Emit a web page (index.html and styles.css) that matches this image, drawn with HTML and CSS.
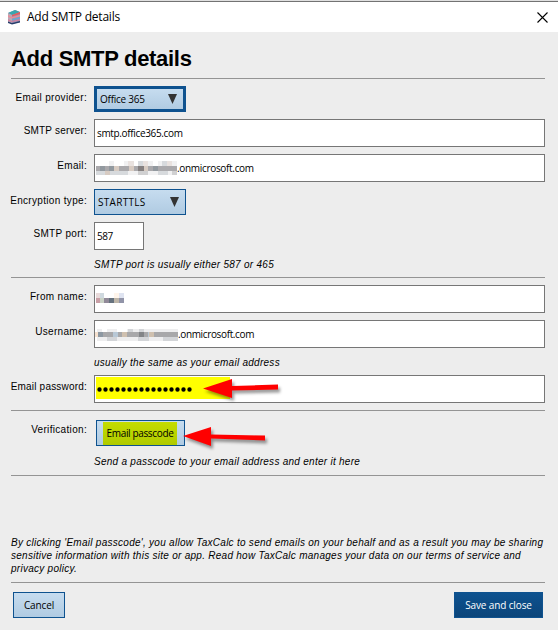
FILE: index.html
```html
<!DOCTYPE html>
<html lang="en">
<head>
<meta charset="utf-8">
<title>Add SMTP details</title>
<link rel="stylesheet" href="styles.css">
</head>
<body>
<header class="titlebar">
  <svg class="logo" width="14" height="16" viewBox="0 0 14 16">
    <path d="M1 4 8 1l5 2v10l-8 2-4-2z" fill="#9b91b5"/>
    <path d="M1 4 8 1l5 2-8 3z" fill="#3aa6ae"/>
    <path d="M1 4l4 2v9l-4-2z" fill="#b6aab8"/>
    <path d="M5 6l8-3v2L5 7.500z" fill="#e65b5c"/>
    <path d="M1 6l4 2 8-2v1.500L5 9.500 1 8z" fill="#e88d98"/>
    <path d="M5 10l8-2v1.500L5 11.500z" fill="#69a9d0"/>
    <path d="M1 10l4 2 8-2v1.500L5 13l-4-1z" fill="#ce829e"/>
    <path d="M1 12.500 5 14l8-2v1.500L5 15.500 1 14z" fill="#263e6b"/>
  </svg>
  <span class="window-name">Add SMTP details</span>
  <svg class="close" width="11" height="11" viewBox="0 0 11 11"><path d="M.5.5l10 10M10.500.5l-10 10" stroke="#000" stroke-width="1.100"/></svg>
</header>
<main>
  <h1>Add SMTP details</h1>
  <section class="group server">
    <div class="row"><label class="l-provider">Email provider:</label><div class="select focused"><span class="t-office">Office 365</span><i class="caret"></i></div></div>
    <div class="row"><label class="l-server">SMTP server:</label><div class="field"><span class="t-server">smtp.office365.com</span></div></div>
    <div class="row"><label class="l-email">Email:</label><div class="field"><svg class="mosaic m-email" width="81" height="14" viewBox="0 0 81 14" shape-rendering="crispEdges">
      <path fill="#f1f1f2" d="M0 0h81v14H0z"/>
      <path fill="#fff" d="M0 0h13v5H0zM18 0h10v5H18zM38 0h4v5h-4zM57 0h5v5h-5z"/>
      <path fill="#e9e2df" d="M32 0h6v5h-6zM47 0h5v5h-5zM71 0h5v5h-5z"/>
      <path fill="#d7dadd" d="M42 0h5v5h-5zM66 0h5v5h-5zM0 10h32v4H0zM62 10h10v4H62z"/>
      <path fill="#aaa9ac" d="M0 5h18v5H0zM23 5h10v5H23zM38 5h5v5h-5zM52 5h29v5H52z"/>
      <path fill="#d7cbc2" d="M18 5h5v5h-5zM33 5h5v5h-5zM9 10h5v4H9zM47 5h5v5h-5z"/>
      <path fill="#858080" d="M42 5h6v5h-6z"/><path fill="#92999f" d="M4 5h5v5H4zM13 5h5v5h-5zM57 5h5v5h-5z"/>
      <path fill="#d0d0d1" d="M42 10h10v4H42zM76 10h5v4h-5z"/>
    </svg><span class="t-domain">.onmicrosoft.com</span></div></div>
    <div class="row"><label class="l-enc">Encryption type:</label><div class="select"><span class="t-tls">STARTTLS</span><i class="caret"></i></div></div>
    <div class="row"><label class="l-port">SMTP port:</label><div class="field short"><span class="t-port">587</span></div></div>
    <p class="hint h-port">SMTP port is usually either 587 or 465</p>
  </section>
  <section class="group account">
    <div class="row"><label class="l-from">From name:</label><div class="field"><svg class="mosaic m-from" width="28" height="10" viewBox="0 0 28 10" shape-rendering="crispEdges">
      <path fill="#e8dada" d="M0 0h4v5H0z"/><path fill="#cfd9df" d="M4 0h4v5H4z"/><path fill="#fff5eb" d="M18 0h5v5h-5z"/><path fill="#dfe4f1" d="M23 0h5v5h-5z"/>
      <path fill="#c99fa6" d="M0 5h4v5H0z"/><path fill="#c9d1c5" d="M4 5h4v5H4z"/><path fill="#918a99" d="M8 5h5v5H8z"/><path fill="#66727e" d="M13 5h5v5h-5z"/><path fill="#beb6a9" d="M18 5h5v5h-5z"/><path fill="#9194a8" d="M23 5h5v5h-5z"/>
    </svg></div></div>
    <div class="row"><label class="l-user">Username:</label><div class="field"><svg class="mosaic m-user" width="83" height="12" viewBox="0 0 82 12" preserveAspectRatio="none" shape-rendering="crispEdges">
      <path fill="#eeeeef" d="M2 0h80v12H2z"/><path fill="#fff" d="M7 0h5v4H7zM22 0h10v4H22z"/>
      <path fill="#f5e1cf" d="M0 3h3v5H0z"/><path fill="#8d98a2" d="M3 3h5v5H3z"/><path fill="#a8a8aa" d="M8 3h10v5H8zM22 3h21v5H22zM48 3h34v5H48z"/>
      <path fill="#b8c8d6" d="M18 3h5v5h-5zM52 3h5v5h-5z"/><path fill="#828487" d="M43 3h5v5h-5z"/><path fill="#cfc0af" d="M27 3h5v5h-5zM53 3h5v5h-5z"/><path fill="#d3d5d8" d="M12 8h10v4H12zM42 8h11v4H42zM67 8h15v4H67zM33 0h5v3h-5zM43 0h5v3h-5z"/>
    </svg><span class="t-domain u-domain">.onmicrosoft.com</span></div></div>
    <p class="hint h-user">usually the same as your email address</p>
    <div class="row"><label class="l-pass">Email password:</label><div class="field"><span class="marked"><svg width="96" height="5" viewBox="0 0 96 5"><path d="M2.500 2.500h91" stroke="#000" stroke-width="4.400" stroke-linecap="round" stroke-dasharray="0 6"/></svg></span>
      <svg class="arrow" width="84" height="24" viewBox="0 0 84 24"><path d="M1 11.500 30 2v7l46-1.400v5L30 13.500V21z" fill="#f00"/></svg></div></div>
  </section>
  <section class="group verify">
    <div class="row"><label class="l-ver">Verification:</label><div class="passcode"><button class="btn"><span class="lit"><span class="t-pass">Email passcode</span></span></button>
      <svg class="arrow" width="86" height="24" viewBox="0 0 86 24"><path d="M1 11 29 2v7.500l54 1v5l-54-2V21z" fill="#f00"/></svg></div></div>
    <p class="hint h-send">Send a passcode to your email address and enter it here</p>
  </section>
  <section class="group legal">
    <p><span class="d1">By clicking 'Email passcode', you allow TaxCalc to send emails on your behalf and as a result you may be sharing</span><br><span class="d2">sensitive information with this site or app. Read how TaxCalc manages your data on our terms of service and</span><br><span class="d3">privacy policy.</span></p>
  </section>
  <footer class="group actions">
    <button class="btn cancel"><span class="t-cancel">Cancel</span></button>
    <button class="btn save"><span class="t-save">Save and close</span></button>
  </footer>
</main>
</body>
</html>
```
FILE: styles.css
```css
* { box-sizing: border-box; }
body { margin: 0; width: 558px; height: 630px; overflow: hidden; background: #ededed; color: #000; font: 10px/14px "Liberation Sans", sans-serif; letter-spacing: .27px; }
.titlebar { height: 32px; background: linear-gradient(#e0e0e0 0 1px, #737373 1px 2px, #fff 2px); display: flex; align-items: center; padding: 2px 10px 0 7px; }
.logo { margin-right: 6px; }
.window-name { font: 12px/16px "Open Sans", sans-serif; letter-spacing: -.22px; }
.close { margin-left: auto; }
main { padding: 0 13px 0 11px; }
h1 { margin: 0; height: 46px; padding-top: 14px; font-size: 22px; line-height: 26px; letter-spacing: -.3px; }
.group { border-top: 1px solid #949494; }
.server { height: 199px; padding-top: 7px; }
.account { height: 133px; padding-top: 7px; }
.verify { height: 65px; padding-top: 9px; }
.legal { height: 107px; padding-top: 60px; }
.legal p { margin: 0; line-height: 13px; font-style: italic; white-space: nowrap; }
.row { display: grid; grid-template-columns: 76px 1fr; column-gap: 7px; margin-bottom: 7px; align-items: start; }
label { justify-self: end; padding-top: 5px; white-space: nowrap; letter-spacing: .32px; }
.l-server, .l-pass { letter-spacing: .2px; }
.field, .select, .btn { font: 10px/14px "Open Sans", sans-serif; letter-spacing: -.35px; }
.field { position: relative; height: 28px; border: 1px solid #767676; background: #fff; display: flex; align-items: center; padding-left: 2px; }
.short { width: 50px; }
.mosaic { display: block; flex: none; }
.m-email { margin-left: -1px; }
.m-from { margin: -2px 0 0 -1px; }
.m-user { margin: 2px 0 0 -2px; }
.t-domain { letter-spacing: -.32px; }
.u-domain { letter-spacing: -.36px; }
.t-tls { letter-spacing: .3px; }
.t-office { letter-spacing: -.25px; }
.t-port { letter-spacing: -.5px; }
.t-cancel, .t-save { letter-spacing: -.13px; }
.select { width: 92px; height: 26px; border: 1px solid #0e528f; background: linear-gradient(#c6dcef, #b0cbe2); display: flex; justify-content: space-between; align-items: center; padding: 0 6px 0 3px; }
.focused { border-width: 3px; }
.caret { width: 9px; height: 10px; background: #333; clip-path: polygon(0 0, 100% 0, 50% 100%); }
.hint { margin: 0 0 0 83px; padding-top: 1px; font-style: italic; white-space: nowrap; }
.h-user { margin-bottom: 5px; }
.marked { width: 134px; height: 22px; background: #ff0; display: flex; align-items: center; padding: 3px 0 0 1px; margin: -2px 0 0 -1px; }
.arrow { position: absolute; filter: drop-shadow(2px 3px 1.500px rgba(0,0,0,.4)); overflow: visible; }
.field .arrow { left: 107px; top: 1px; }
.passcode { position: relative; padding-left: 2px; }
.passcode .arrow { left: 88px; top: 5px; }
.verify label { padding-top: 3px; }
.h-send { padding-top: 2px; }
.btn { height: 26px; border: 1px solid #0e528f; border-radius: 0; background: linear-gradient(#c6dcef, #b0cbe2); color: #000; padding: 0; display: flex; align-items: center; justify-content: center; }
.passcode .btn { width: 89px; }
.lit { width: 74px; height: 23px; line-height: 23px; background: linear-gradient(#c4dc00, #b0cb00); white-space: nowrap; margin-right: 1px; }
.actions { display: flex; justify-content: space-between; padding: 9px 2px 0; }
.cancel { width: 52px; }
.save { width: 89px; background: linear-gradient(#0e528f, #0b457a); color: #fff; }
```
